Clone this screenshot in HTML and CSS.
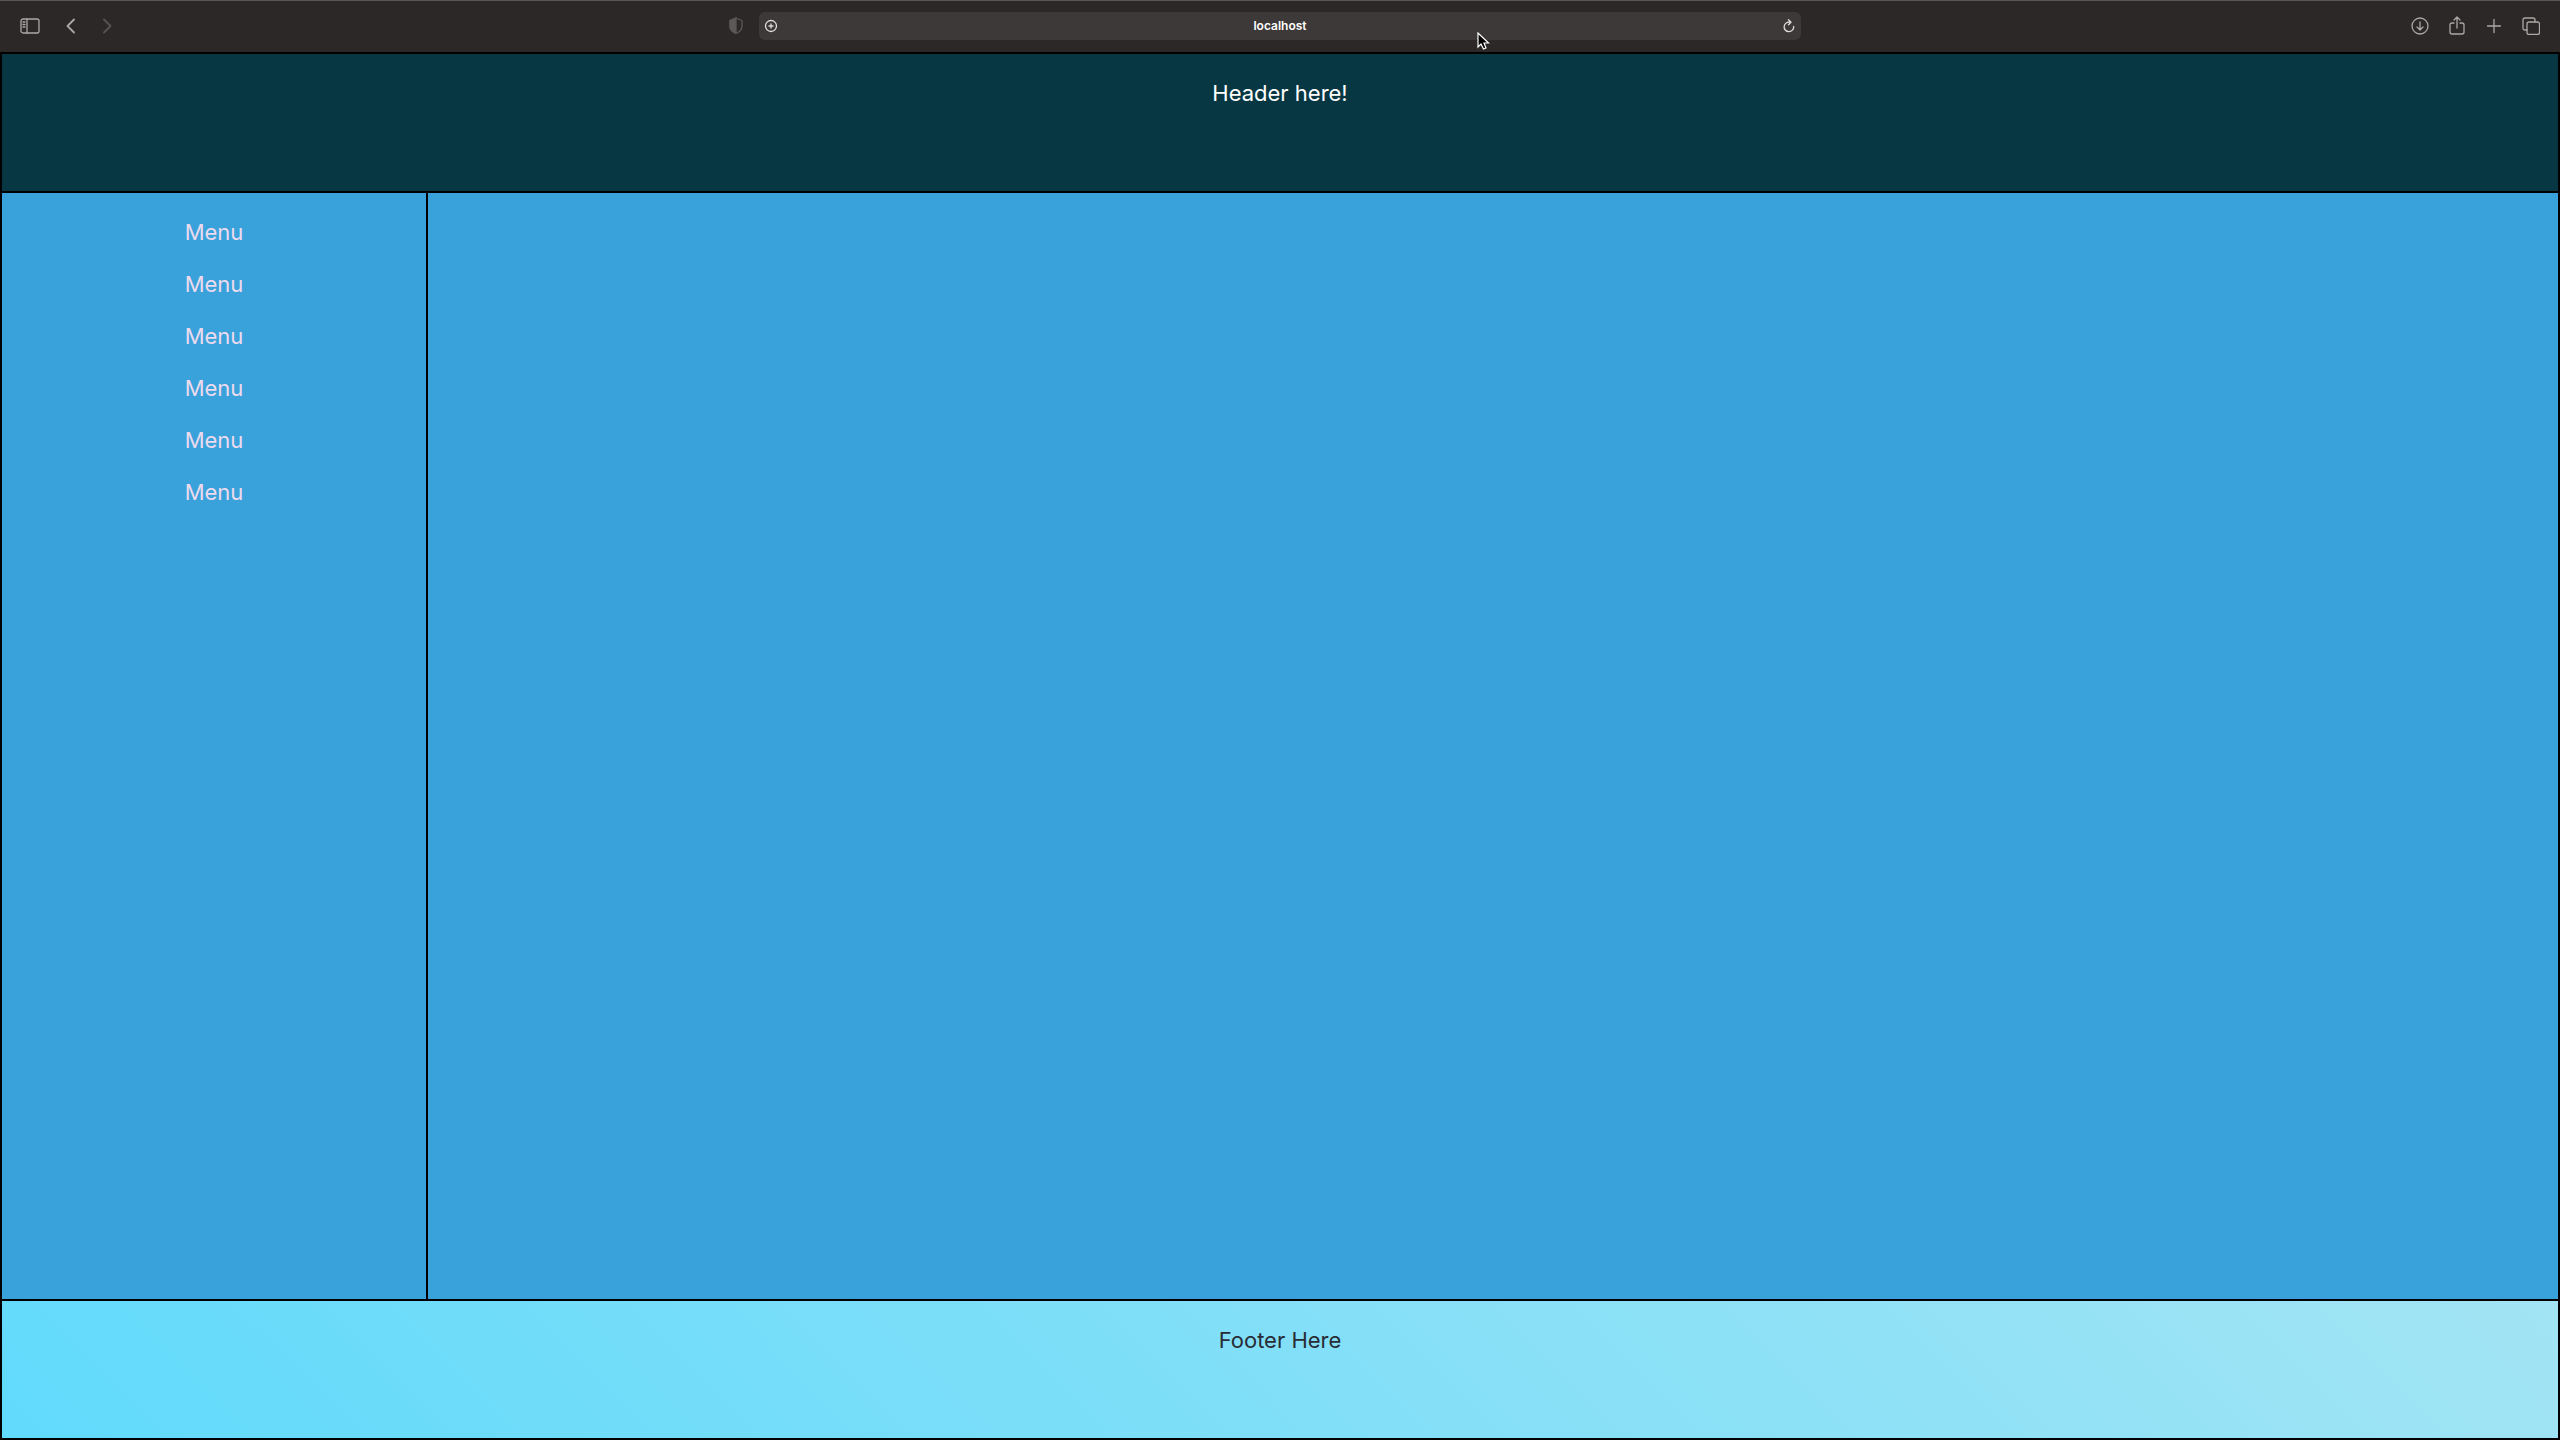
FILE: index.html
```
<!DOCTYPE html>
<html lang="en">
<head>
<meta charset="utf-8">
<meta name="viewport" content="width=device-width, initial-scale=1">
<title>localhost</title>
<link rel="stylesheet" href="styles.css">
</head>
<body>
<div class="toolbar">
  <div class="group nav">
    <button class="tool sidebar" aria-label="Show sidebar"><svg width="20" height="16" viewBox="0 0 20 16"><rect x="1" y="1" width="18" height="14" rx="2"/><path d="M7 1v14M3 4h2M3 6.500h2M3 9h2"/></svg></button>
    <button class="tool" aria-label="Back"><svg width="20" height="16" viewBox="0 0 20 16"><path class="bold" d="M14 1.500 7.500 8l6.500 6.500"/></svg></button>
    <button class="tool dim" aria-label="Forward"><svg width="20" height="16" viewBox="0 0 20 16"><path class="bold" d="M6 1.500 12.500 8 6 14.500"/></svg></button>
    <button class="tool shield" aria-label="Privacy report"><svg width="16" height="18" viewBox="0 0 16 18"><path d="M8 1 14 3.500V9c0 3.500-2.500 6-6 7.500C4.500 15 2 12.500 2 9V3.500z"/><path class="fill" d="M8 1v15.500C4.500 15 2 12.500 2 9V3.500z"/></svg></button>
  </div>
  <div class="address">
    <button class="tool bright" aria-label="Page options"><svg width="14" height="14" viewBox="0 0 14 14"><circle cx="7" cy="7" r="5.500"/><path d="M7 5v4M5 7h4"/></svg></button>
    <input class="url" type="text" aria-label="Address" value="localhost">
    <button class="tool bright" aria-label="Reload"><svg width="14" height="16" viewBox="0 0 14 16"><path d="M8 4.200a4.800 4.800 0 1 0 3.700 4.300M5.500 4.200h3M6.500 1.800l2.500 2.500-2.500 2.500"/></svg></button>
  </div>
  <div class="group actions">
    <button class="tool" aria-label="Downloads"><svg width="18" height="18" viewBox="0 0 18 18"><circle cx="9" cy="9" r="8"/><path d="M9 5v8M6 10l3 3 3-3"/></svg></button>
    <button class="tool" aria-label="Share"><svg width="18" height="20" viewBox="0 0 18 20"><path d="M6 7H4Q2 7 2 9v7q0 2 2 2h10q2 0 2-2V9q0-2-2-2h-2M9 12V1M6 4l3-3 3 3"/></svg></button>
    <button class="tool" aria-label="New tab"><svg width="18" height="18" viewBox="0 0 18 18"><path d="M9 2.500v13M2.500 9h13"/></svg></button>
    <button class="tool" aria-label="Tab overview"><svg width="18" height="18" viewBox="0 0 18 18"><rect x="5" y="5" width="12.500" height="12.500" rx="2"/><path d="M5 13H3Q1 13 1 11V3q0-2 2-2h8q2 0 2 2v2"/></svg></button>
  </div>
  <svg class="cursor" width="14" height="20" viewBox="0 0 14 20" aria-hidden="true"><path d="M1 1v14l3-3 2.500 5 2.500-1-2-5h4.500z"/></svg>
</div>
<div class="page">
  <header class="header">Header here!</header>
  <nav class="menu">
    <a href="#">Menu</a>
    <a href="#">Menu</a>
    <a href="#">Menu</a>
    <a href="#">Menu</a>
    <a href="#">Menu</a>
    <a href="#">Menu</a>
  </nav>
  <main class="content"></main>
  <footer class="footer">Footer Here</footer>
</div>
</body>
</html>
```
FILE: styles.css
```
* { box-sizing: border-box; }
body {
  margin: 0;
  min-height: 100vh;
  display: flex;
  flex-direction: column;
  font-family: Inter, "Liberation Sans", sans-serif;
}
.toolbar {
  position: relative;
  display: grid;
  grid-template-columns: 1fr 1042px 1fr;
  align-items: center;
  height: 52px;
  padding: 0 20px 1px;
  background: #2c2827;
  border-top: 1px solid #5b5757;
}
.group { display: flex; align-items: center; }
.nav { gap: 18px; }
.actions { justify-content: flex-end; gap: 19px; }
.tool {
  display: flex;
  padding: 0;
  border: 0;
  background: none;
  color: #aaa8a7;
}
.sidebar { margin-right: 2px; }
.dim { color: #575453; }
.bright { color: #dedddc; }
.shield { margin: 0 15px 0 auto; color: #5b5857; }
.tool svg {
  fill: none;
  stroke: currentColor;
  stroke-width: 1.3;
  stroke-linecap: round;
  stroke-linejoin: round;
}
.tool .bold { stroke-width: 1.8; }
.tool .fill { fill: currentColor; }
.address {
  display: flex;
  align-items: center;
  height: 28px;
  padding: 0 5px;
  border-radius: 6px;
  background: #3d3938;
}
.url {
  flex: 1;
  min-width: 0;
  padding: 0;
  border: 0;
  outline: 0;
  background: none;
  color: #fff;
  font: 600 12px/16px Inter, "Liberation Sans", sans-serif;
  text-align: center;
}
.cursor {
  position: absolute;
  left: 1477px;
  top: 31px;
  fill: #000;
  stroke: #fff;
  stroke-width: 1.2;
}
.page {
  flex: 1;
  display: grid;
  grid-template: 139px 1fr 139px / 1fr 5fr;
  border: 2px solid #000;
  font-size: 22px;
  line-height: 26px;
  text-align: center;
}
.header {
  grid-column: 1 / -1;
  padding: 26px;
  border-bottom: 2px solid #000;
  background: #073743;
  color: #fff;
}
.menu {
  display: flex;
  flex-direction: column;
  align-items: center;
  gap: 26px;
  padding: 26px;
  border-right: 2px solid #000;
  background: #39a2db;
}
.menu a { color: #ecdaee; text-decoration: none; }
.content { background: #39a2db; }
.footer {
  grid-column: 1 / -1;
  padding: 26px;
  border-top: 2px solid #000;
  background: linear-gradient(45deg, #61dafb, #a2e4f4);
  color: #282c34;
}
```
